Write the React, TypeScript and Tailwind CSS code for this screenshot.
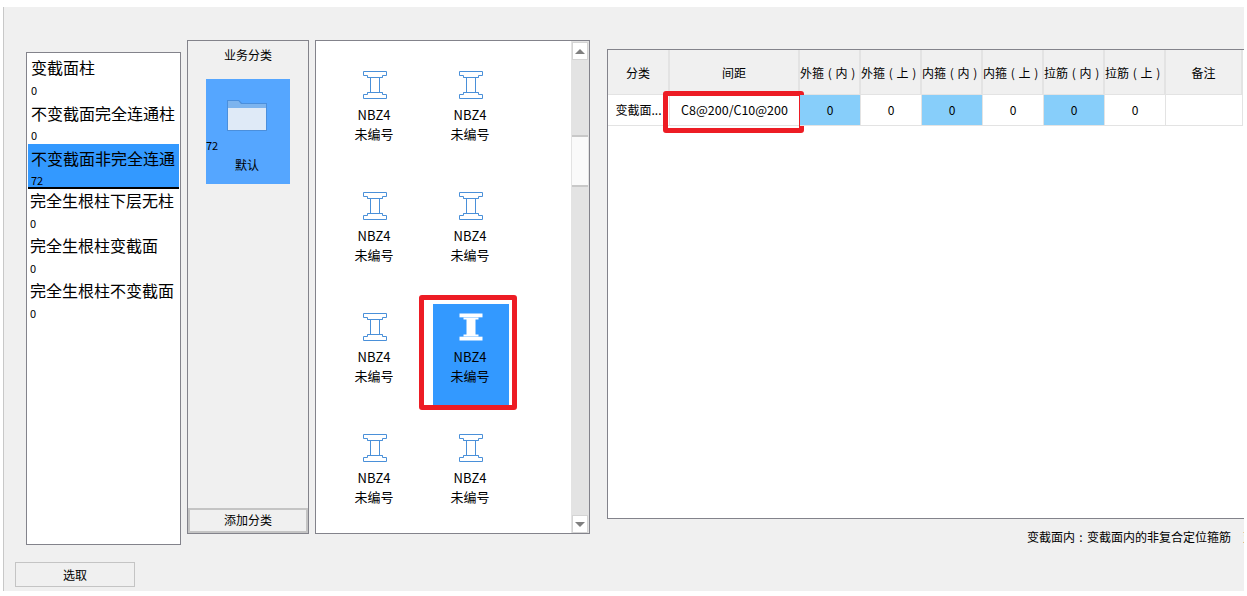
const font = { fontFamily: '"Noto Sans CJK SC", "Noto Sans", sans-serif' };

const listItems = [
  { name: '变截面柱', count: '0', box: 'h-[45px] pl-[4px] pt-[2px]', num: 'mt-[5px]' },
  { name: '不变截面完全连通柱', count: '0', box: 'h-[45px] pl-[4px] pt-[3px]', num: 'mt-[4px]' },
  { name: '不变截面非完全连通', count: '72', box: 'h-[45px] pl-[3px] pt-[3px] mx-px bg-[#3399ff] border-b-2 border-black', num: 'mt-[4px]' },
  { name: '完全生根柱下层无柱', count: '0', box: 'h-[45px] pl-[3px]', num: 'mt-[5px]' },
  { name: '完全生根柱变截面', count: '0', box: 'h-[45px] pl-[3px]', num: 'mt-[5px]' },
  { name: '完全生根柱不变截面', count: '0', box: 'h-[45px] pl-[3px]', num: 'mt-[5px]' },
];

function BeamIcon({ selected }: { selected?: boolean }) {
  const outline = 'M.5 .5H23.5V4.5H19.5V6.5H16.5V21.5H19.5V23.5H23.5V27.5H.5V23.5H4.5V21.5H7.5V6.5H4.5V4.5H.5Z';
  return (
    <svg width="24" height="28" viewBox="0 0 24 28" className="block">
      {selected ? (
        <>
          <path d={outline} fill="#fff" />
          <path d="M0 4.5H24M0 23.5H24" stroke="#3399ff" strokeWidth="1" opacity="0.35" />
        </>
      ) : (
        <>
          <path d={outline} fill="none" stroke="#4a90d9" strokeWidth="1" />
          <path d="M4.5 6.5H19.5M4.5 21.5H19.5" fill="none" stroke="#4a90d9" strokeWidth="1" />
        </>
      )}
    </svg>
  );
}

function BeamItem({ selected }: { selected?: boolean }) {
  return (
    <div className={selected ? 'relative h-[101px] bg-[#3399ff] flex flex-col items-center pt-[9px]' : 'relative h-[101px] flex flex-col items-center pt-[9px]'}>
      <BeamIcon selected={selected} />
      <div className="mt-[6px] pr-[2px] text-[13px] leading-[19px] text-black">NBZ4</div>
      <div className="pr-[2px] text-[13px] leading-[19px] text-black">未编号</div>
      {selected && (
        <div className="absolute left-[-14px] top-[-9px] w-[98px] h-[115px] border-[5px] border-[#ed1c24] rounded-[3px]" />
      )}
    </div>
  );
}

function Paren({ a, b }: { a: string; b: string }) {
  return (
    <>
      {a}
      <span className="inline-block w-[12px] text-center">(</span>
      {b}
      <span className="inline-block w-[12px] text-center">)</span>
    </>
  );
}

const headers: [string, React.ReactNode][] = [
  ['a', '分类'],
  ['b', '间距'],
  ['c', <Paren a="外箍" b="内" />],
  ['d', <Paren a="外箍" b="上" />],
  ['e', <Paren a="内箍" b="内" />],
  ['f', <Paren a="内箍" b="上" />],
  ['g', <Paren a="拉筋" b="内" />],
  ['h', <Paren a="拉筋" b="上" />],
  ['i', '备注'],
];

function Cell({ blue, children }: { blue?: boolean; children?: React.ReactNode }) {
  return (
    <div className={blue
      ? 'relative h-[31px] flex items-center justify-center bg-[#87cefa] border-r border-b border-[#e3e3e3] text-[12px] text-black'
      : 'relative h-[31px] flex items-center justify-center bg-white border-r border-b border-[#e3e3e3] text-[12px] text-black'}>
      {children}
    </div>
  );
}

export default function App() {
  return (
    <div className="w-[1247px] h-[596px] bg-white overflow-hidden" style={font}>
      <div className="ml-[3px] mt-[7px] w-[1241px] h-[584px] inline-block align-top bg-[#f0f0f0] border-l border-[#c8c8c8] overflow-hidden">
        <div className="flex items-start pl-[22px] pt-[33px] h-[522px]">
          {/* Left list */}
          <div className="mt-[12px] w-[155px] h-[493px] shrink-0 bg-white border border-[#83838b] overflow-hidden pt-px">
            {listItems.map((it) => (
              <div key={it.name} className={it.box}>
                <div className="text-[16px] leading-[22px] text-black whitespace-nowrap overflow-hidden">{it.name}</div>
                <div className={`${it.num} text-[11px] leading-[14px] text-black`}>{it.count}</div>
              </div>
            ))}
          </div>

          {/* Category */}
          <div className="ml-[6px] w-[122px] h-[494px] shrink-0 flex flex-col border border-[#83838b] bg-[#f0f0f0]">
            <div className="h-[28px] flex items-center justify-center text-[12px] text-black">业务分类</div>
            <div className="flex-1 pl-[18px] pt-[10px]">
              <div className="w-[84px] h-[105px] bg-[#55a6ff] flex flex-col">
                <div className="pt-[20px] pl-[20px]">
                  <svg width="42" height="33" viewBox="0 0 42 33" className="block blur-[0.5px]">
                    <path d="M1 1H13L16 4H41V32H1Z" fill="#4b8fdc" />
                    <path d="M2 2H12.5L15 5H40V9H2Z" fill="#7db4ee" />
                    <rect x="2" y="9" width="38" height="22" fill="#dfeaf7" />
                  </svg>
                </div>
                <div className="mt-[6px] text-[11px] leading-[14px] text-black">72</div>
                <div className="mt-[4px] pr-[2px] text-center text-[12px] leading-[17px] text-black">默认</div>
              </div>
            </div>
            <div className="h-[25px] pb-[2px] flex items-center justify-center border-2 border-[#c4c4c4] text-[12px] text-black">添加分类</div>
          </div>

          {/* Grid */}
          <div className="ml-[6px] w-[275px] h-[494px] shrink-0 flex border border-[#83838b] bg-white">
            <div className="flex-1 overflow-hidden pl-[21px] pt-[21px]">
              <div className="grid grid-cols-[76px_76px] gap-x-[20px] gap-y-[20px]">
                <BeamItem />
                <BeamItem />
                <BeamItem />
                <BeamItem />
                <BeamItem />
                <BeamItem selected />
                <BeamItem />
                <BeamItem />
              </div>
            </div>
            <div className="w-[18px] shrink-0 bg-[#e3e3e3] flex flex-col pt-px">
              <div className="h-[18px] mx-px bg-white border border-[#d4d4d4] flex items-center justify-center">
                <div className="w-0 h-0 border-l-[5px] border-r-[5px] border-b-[5px] border-l-transparent border-r-transparent border-b-[#808080]" />
              </div>
              <div className="h-[75px]" />
              <div className="h-[52px] mx-px bg-[#fafafa] border-y-2 border-[#c8c8c8]" />
              <div className="flex-1" />
              <div className="h-[18px] mx-px bg-white border border-[#d4d4d4] flex items-center justify-center">
                <div className="w-0 h-0 border-l-[5px] border-r-[5px] border-t-[5px] border-l-transparent border-r-transparent border-t-[#808080]" />
              </div>
            </div>
          </div>

          {/* Table + note */}
          <div className="ml-[17px] mt-[9px] w-[637px] shrink-0 flex flex-col">
            <div className="h-[470px] bg-white border-l border-y border-[#83838b]">
              <div className="grid grid-cols-[62px_130px_61px_61px_61px_61px_61px_61px_77px]">
                {headers.map(([k, h]) => (
                  <div key={k} className="h-[45px] pt-px flex items-center justify-center bg-[#f0f0f0] border-r-2 border-b border-[#e3e3e3] text-[12px] text-black whitespace-nowrap overflow-hidden">
                    {h}
                  </div>
                ))}
                <Cell>变截面...</Cell>
                <Cell>
                  <span className="text-[12.5px]">C8@200/C10@200</span>
                  <div className="absolute left-[-7px] top-[-4px] w-[141px] h-[42px] border-[5px] border-[#ed1c24] rounded-[3px]" />
                </Cell>
                <Cell blue>0</Cell>
                <Cell>0</Cell>
                <Cell blue>0</Cell>
                <Cell>0</Cell>
                <Cell blue>0</Cell>
                <Cell>0</Cell>
                <Cell />
              </div>
            </div>
            <div className="mt-[9px] pl-[420px] flex text-[12px] leading-[17px] text-black whitespace-nowrap overflow-hidden">
              <span className="w-[216px] shrink-0">变截面内<span className="inline-block w-[12px] text-center">:</span>变截面内的非复合定位箍筋</span>
              <span>变截面外：变截面外的非复合定位箍筋</span>
            </div>
          </div>
        </div>

        {/* Button */}
        <div className="ml-[11px] mt-[33px] w-[120px] h-[25px] flex items-center justify-center border border-[#c4c4c4] text-[12px] text-black">选取</div>
      </div>
    </div>
  );
}
